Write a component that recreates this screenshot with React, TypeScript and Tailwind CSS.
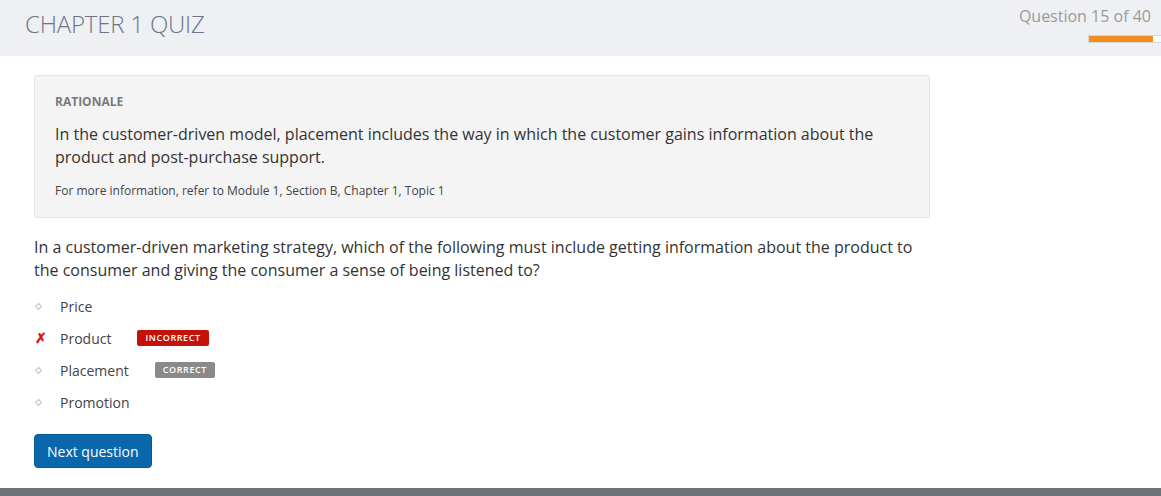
import React from 'react';

const options = [
  { label: 'Price', state: 'none' },
  { label: 'Product', state: 'incorrect' },
  { label: 'Placement', state: 'correct' },
  { label: 'Promotion', state: 'none' },
];

const Bullet: React.FC = () => (
  <svg width="7" height="7" viewBox="0 0 7 7" className="block">
    <path d="M3.5 0.5 L6.5 3.5 L3.5 6.5 L0.5 3.5 Z" fill="none" stroke="#c8c8c8" strokeWidth="1.2" />
  </svg>
);

const App: React.FC = () => {
  return (
    <div className="w-[1161px] h-[496px] bg-white flex flex-col font-['Open_Sans',sans-serif] overflow-hidden">
      {/* header */}
      <div className="h-[56px] bg-[#eff0f4] flex justify-between shrink-0">
        <h1 className="pl-[25px] pt-[6px] text-[24px] font-light text-[#6b7585] tracking-[-0.2px]">CHAPTER 1 QUIZ</h1>
        <div className="flex flex-col items-end pt-[4px]">
          <div className="pr-[10px] text-[16px] text-[#9a9a9a]">Question 15 of 40</div>
          <div className="mt-[7px] w-[73px] h-[8px] bg-white border border-[#d8d8d8] border-r-0">
            <div className="h-full w-[64px] bg-[#f28c1f]" />
          </div>
        </div>
      </div>

      <div className="flex-1 px-[34px] pt-[19px]">
        {/* rationale */}
        <div className="w-[896px] bg-[#f4f4f4] border border-[#e3e3e3] rounded-[3px] px-[20px] pt-[17px] pb-[18px]">
          <div className="text-[12px] font-bold text-[#7a7a7a] leading-[18px]">RATIONALE</div>
          <p className="mt-[12px] text-[16px] leading-[23px] text-[#333]">
            In the customer-driven model, placement includes the way in which the customer gains information about the product and post-purchase support.
          </p>
          <p className="mt-[14px] text-[12px] leading-[16px] text-[#444]">
            For more information, refer to Module 1, Section B, Chapter 1, Topic 1
          </p>
        </div>

        {/* question */}
        <p className="mt-[18px] w-[896px] text-[16px] leading-[23px] text-[#333]">
          In a customer-driven marketing strategy, which of the following must include getting information about the product to the consumer and giving the consumer a sense of being listened to?
        </p>

        <ul className="mt-[8px] flex flex-col">
          {options.map((o) => (
            <li key={o.label} className="h-[32px] flex items-center text-[14px] text-[#444]">
              <span className="w-[26px] flex items-center">
                {o.state === 'incorrect' ? (
                  <span className="text-[#e01010] text-[14px] font-bold leading-none pl-[1px]">✗</span>
                ) : (
                  <span className="pl-[1px]"><Bullet /></span>
                )}
              </span>
              <span>{o.label}</span>
              {o.state === 'incorrect' && (
                <span className="ml-[26px] h-[16px] px-[8px] rounded-[2px] bg-[#c4120a] text-white text-[9px] font-semibold tracking-[0.6px] flex items-center">INCORRECT</span>
              )}
              {o.state === 'correct' && (
                <span className="ml-[26px] h-[16px] px-[8px] rounded-[2px] bg-[#8a8a8a] text-white text-[9px] font-semibold tracking-[0.6px] flex items-center">CORRECT</span>
              )}
            </li>
          ))}
        </ul>

        <button className="mt-[16px] h-[34px] px-[12px] rounded-[4px] bg-[#0867ad] border border-[#055a96] text-white text-[14px]">
          Next question
        </button>
      </div>

      <div className="h-[8px] bg-[#6b737b] shrink-0" />
    </div>
  );
};

export default App;
